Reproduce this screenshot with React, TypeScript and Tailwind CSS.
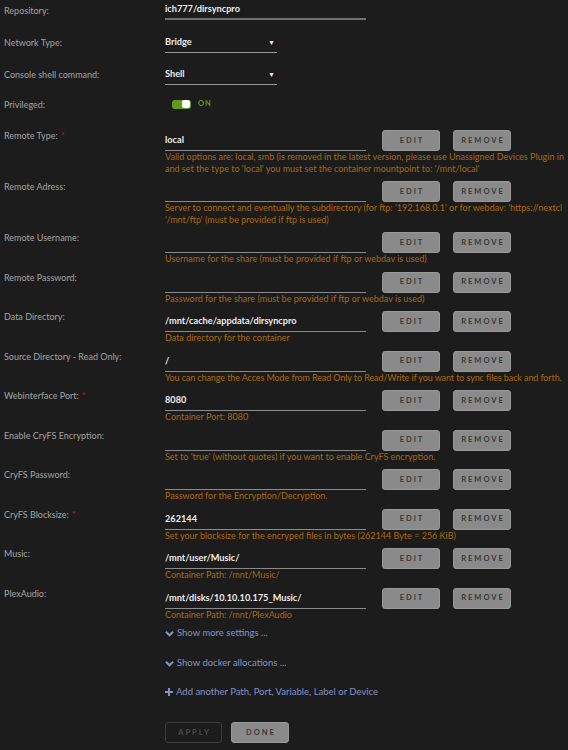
const font = { fontFamily: 'Lato, "Liberation Sans", sans-serif' }

interface FieldRow {
  label: string
  required?: boolean
  value: string
  desc: string[]
  tight?: boolean
}

const rows: FieldRow[] = [
  {
    label: 'Remote Type:',
    required: true,
    value: 'local',
    desc: [
      'Valid options are: local, smb (is removed in the latest version, please use Unassigned Devices Plugin in',
      "and set the type to 'local' you must set the container mountpoint to: '/mnt/local'",
    ],
  },
  {
    label: 'Remote Adress:',
    value: '',
    desc: [
      "Server to connect and eventually the subdirectory (for ftp: '192.168.0.1' or for webdav: 'https://nextcl",
      "'/mnt/ftp' (must be provided if ftp is used)",
    ],
  },
  { label: 'Remote Username:', value: '', desc: ['Username for the share (must be provided if ftp or webdav is used)'] },
  { label: 'Remote Password:', value: '', desc: ['Password for the share (must be provided if ftp or webdav is used)'] },
  { label: 'Data Directory:', value: '/mnt/cache/appdata/dirsyncpro', desc: ['Data directory for the container'] },
  {
    label: 'Source Directory - Read Only:',
    value: '/',
    desc: ['You can change the Acces Mode from Read Only to Read/Write if you want to sync files back and forth.'],
    tight: true,
  },
  { label: 'Webinterface Port:', required: true, value: '8080', desc: ['Container Port: 8080'] },
  {
    label: 'Enable CryFS Encryption:',
    value: '',
    desc: ["Set to 'true' (without quotes) if you want to enable CryFS encryption."],
  },
  { label: 'CryFS Password:', value: '', desc: ['Password for the Encryption/Decryption.'] },
  {
    label: 'CryFS Blocksize:',
    required: true,
    value: '262144',
    desc: ['Set your blocksize for the encryped files in bytes (262144 Byte = 256 KiB)'],
  },
  { label: 'Music:', value: '/mnt/user/Music/', desc: ['Container Path: /mnt/Music/'] },
  { label: 'PlexAudio:', value: '/mnt/disks/10.10.10.175_Music/', desc: ['Container Path: /mnt/PlexAudio'] },
]

function Btn({ children }: { children: string }) {
  return (
    <div className="w-[58px] h-[21px] rounded-[3px] bg-[#8a8a8a] border border-[#989898] flex items-center justify-center text-[7.5px] font-bold tracking-[2px] text-[#383838] pl-[2px]">
      {children}
    </div>
  )
}

function SelectField({ value }: { value: string }) {
  return (
    <div className="w-[112px] h-[21px] border-b-[1.5px] border-[#9a9a9a] flex items-center justify-between pr-[2px]">
      <span className="text-[9.2px] font-bold text-[#ececec]">{value}</span>
      <span className="text-[7px] text-[#ececec]">▼</span>
    </div>
  )
}

export default function App() {
  return (
    <div className="w-[568px] h-[750px] bg-[#1c1c1c] overflow-hidden text-[9px]" style={font}>
      {/* top settings */}
      <div className="flex h-[32px]">
        <div className="w-[165px] pl-[4px] pt-[4px] text-[#a3a3a3]">Repository:</div>
        <div className="w-[201px] h-[20px] border-b-2 border-[#707070] flex items-center text-[9.2px] font-bold text-[#ececec]">
          ich777/dirsyncpro
        </div>
      </div>
      <div className="flex h-[32px]">
        <div className="w-[165px] pl-[4px] pt-[4px] text-[#a3a3a3]">Network Type:</div>
        <SelectField value="Bridge" />
      </div>
      <div className="flex h-[32px]">
        <div className="w-[165px] pl-[4px] pt-[4px] text-[#a3a3a3]">Console shell command:</div>
        <SelectField value="Shell" />
      </div>
      <div className="flex h-[34px] pt-[2px]">
        <div className="w-[165px] pl-[4px] text-[#a3a3a3]">Privileged:</div>
        <div className="flex items-center gap-[7px] pl-[7px] h-[12px]">
          <div className="w-[19px] h-[9px] rounded-[3px] bg-[#5f9a1f] flex justify-end items-center pr-[1px]">
            <div className="w-[8px] h-[8px] rounded-[2px] bg-white" />
          </div>
          <span className="text-[7.5px] font-bold tracking-[1px] text-[#5f9a1f]">ON</span>
        </div>
      </div>

      {/* container fields */}
      <div>
        {rows.map((r) => (
          <div key={r.label} className="flex mb-[7px]">
            <div className="w-[165px] shrink-0 pl-[4px] leading-[12px] text-[#a3a3a3]">
              {r.label}
              {r.required && <span className="text-[#d11] ml-[3px]">*</span>}
            </div>
            <div className="shrink-0">
              <div className="flex items-start">
                <div className="w-[201px] h-[21px] border-b-[1.5px] border-[#8a8a8a] flex items-center text-[9.2px] font-bold text-[#ececec]">
                  {r.value}
                </div>
                <div className="flex gap-[13px] ml-[16px]">
                  <Btn>EDIT</Btn>
                  <Btn>REMOVE</Btn>
                </div>
              </div>
              {r.desc.map((d) => (
                <div
                  key={d}
                  className={
                    r.tight
                      ? 'whitespace-nowrap leading-[11.5px] text-[9px] tracking-[-0.1px] text-[#a8680f]'
                      : 'whitespace-nowrap leading-[11.5px] text-[9px] text-[#a8680f]'
                  }
                >
                  {d}
                </div>
              ))}
            </div>
          </div>
        ))}
      </div>

      {/* links */}
      <div className="pl-[165px] text-[9.5px] text-[#8592c6]">
        <div className="flex items-center gap-[3px] h-[12px]">
          <svg width="9" height="7" viewBox="0 0 10 8" fill="none" stroke="#8592c6" strokeWidth="2.4">
            <path d="M1 2l4 4 4-4" />
          </svg>
          <span>Show more settings ...</span>
        </div>
        <div className="flex items-center gap-[3px] h-[12px] mt-[18px]">
          <svg width="9" height="7" viewBox="0 0 10 8" fill="none" stroke="#8592c6" strokeWidth="2.4">
            <path d="M1 2l4 4 4-4" />
          </svg>
          <span>Show docker allocations ...</span>
        </div>
        <div className="flex items-center gap-[3px] h-[12px] mt-[17px]">
          <svg width="8" height="8" viewBox="0 0 8 8" fill="none" stroke="#8592c6" strokeWidth="2">
            <path d="M4 0v8M0 4h8" />
          </svg>
          <span>Add another Path, Port, Variable, Label or Device</span>
        </div>
        <div className="flex gap-[9px] mt-[24px]">
          <div className="w-[57px] h-[21px] rounded-[3px] border border-[#3c3c3c] flex items-center justify-center text-[7.5px] font-bold tracking-[2px] text-[#4a4a4a] pl-[2px]">
            APPLY
          </div>
          <div className="w-[58px] h-[21px] rounded-[3px] bg-[#8a8a8a] border border-[#989898] flex items-center justify-center text-[7.5px] font-bold tracking-[2px] text-[#383838] pl-[2px]">
            DONE
          </div>
        </div>
      </div>
    </div>
  )
}
